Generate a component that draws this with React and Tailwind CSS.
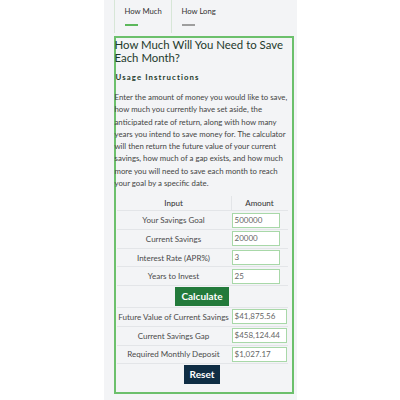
import React from "react";

const inputs = [
  { label: "Your Savings Goal", value: "500000" },
  { label: "Current Savings", value: "20000" },
  { label: "Interest Rate (APR%)", value: "3" },
  { label: "Years to Invest", value: "25" },
];

const results = [
  { label: "Future Value of Current Savings", value: "$41,875.56" },
  { label: "Current Savings Gap", value: "$458,124.44" },
  { label: "Required Monthly Deposit", value: "$1,027.17" },
];

const Row = ({ label, value, wide }) => (
  <div className="flex h-[18.7px] items-center border-t border-[#e3e5e8]">
    <div className="w-[114px] text-center text-[#4a4a4a]">{label}</div>
    <div className="flex-1 pl-[1px]">
      <div
        className={
          "h-[15px] border border-[#a8d8a8] bg-white pl-[2px] text-[8px] leading-[13px] text-[#666] " +
          (wide ? "w-[55px]" : "w-[48px]")
        }
      >
        {value}
      </div>
    </div>
  </div>
);

export default function App() {
  return (
    <div className="flex h-[400px] w-full justify-center bg-white font-['Lato',sans-serif]">
      <div className="h-[400px] w-[193px] bg-[#f3f4f6] pl-[10px] pr-[3px]">
        <div className="flex h-[36px] text-[7.7px] text-[#333]">
          <div className="h-[33px] w-[58px] border-x border-[#d7e6d7] pl-[10px] pt-[6px]">
            <div className="leading-[10px]">How Much</div>
            <div className="mt-[8px] h-[2px] w-[13px] bg-[#5cb85c]"></div>
          </div>
          <div className="w-[60px] pl-[10px] pt-[6px]">
            <div className="leading-[10px]">How Long</div>
            <div className="mt-[8px] h-[2px] w-[13px] bg-[#9e9e9e]"></div>
          </div>
        </div>
        <div className="h-[358px] border-2 border-[#6cc06c] pr-[1px]">
          <h2 className="-ml-[1px] text-[11.4px] leading-[13px] text-[#1e3a2c]">
            How Much Will You Need to Save Each Month?
          </h2>
          <h3 className="mt-[8px] text-[7.8px] leading-[10px] font-bold tracking-[1.1px] text-[#1e3a2c]">
            Usage Instructions
          </h3>
          <p className="-ml-[1px] mt-[9px] text-[7.8px] leading-[12.3px] text-[#444]">
            Enter the amount of money you would like to save, how much you currently have set aside, the
            anticipated rate of return, along with how many years you intend to save money for. The
            calculator will then return the future value of your current savings, how much of a gap
            exists, and how much more you will need to save each month to reach your goal by a specific
            date.
          </p>
          <div className="ml-[1px] mr-[3px] mt-[7px] text-[8px]">
            <div className="flex h-[14px] items-center font-medium text-[#3a3a3a]">
              <div className="w-[114px] text-center">Input</div>
              <div className="flex h-full flex-1 items-center justify-center border-l border-[#e3e5e8]">
                Amount
              </div>
            </div>
            {inputs.map((r) => (
              <Row key={r.label} {...r} />
            ))}
            <div className="flex h-[22px] items-center justify-center border-t border-[#e3e5e8]">
              <button className="h-[19px] bg-[#237a3b] px-[6px] text-[10px] font-bold text-white">
                Calculate
              </button>
            </div>
            {results.map((r) => (
              <Row key={r.label} {...r} wide />
            ))}
            <div className="flex h-[22px] items-center justify-center border-t border-[#e3e5e8]">
              <button className="h-[19px] bg-[#0f2d44] px-[6px] text-[10px] font-bold text-white">
                Reset
              </button>
            </div>
          </div>
        </div>
      </div>
    </div>
  );
}
